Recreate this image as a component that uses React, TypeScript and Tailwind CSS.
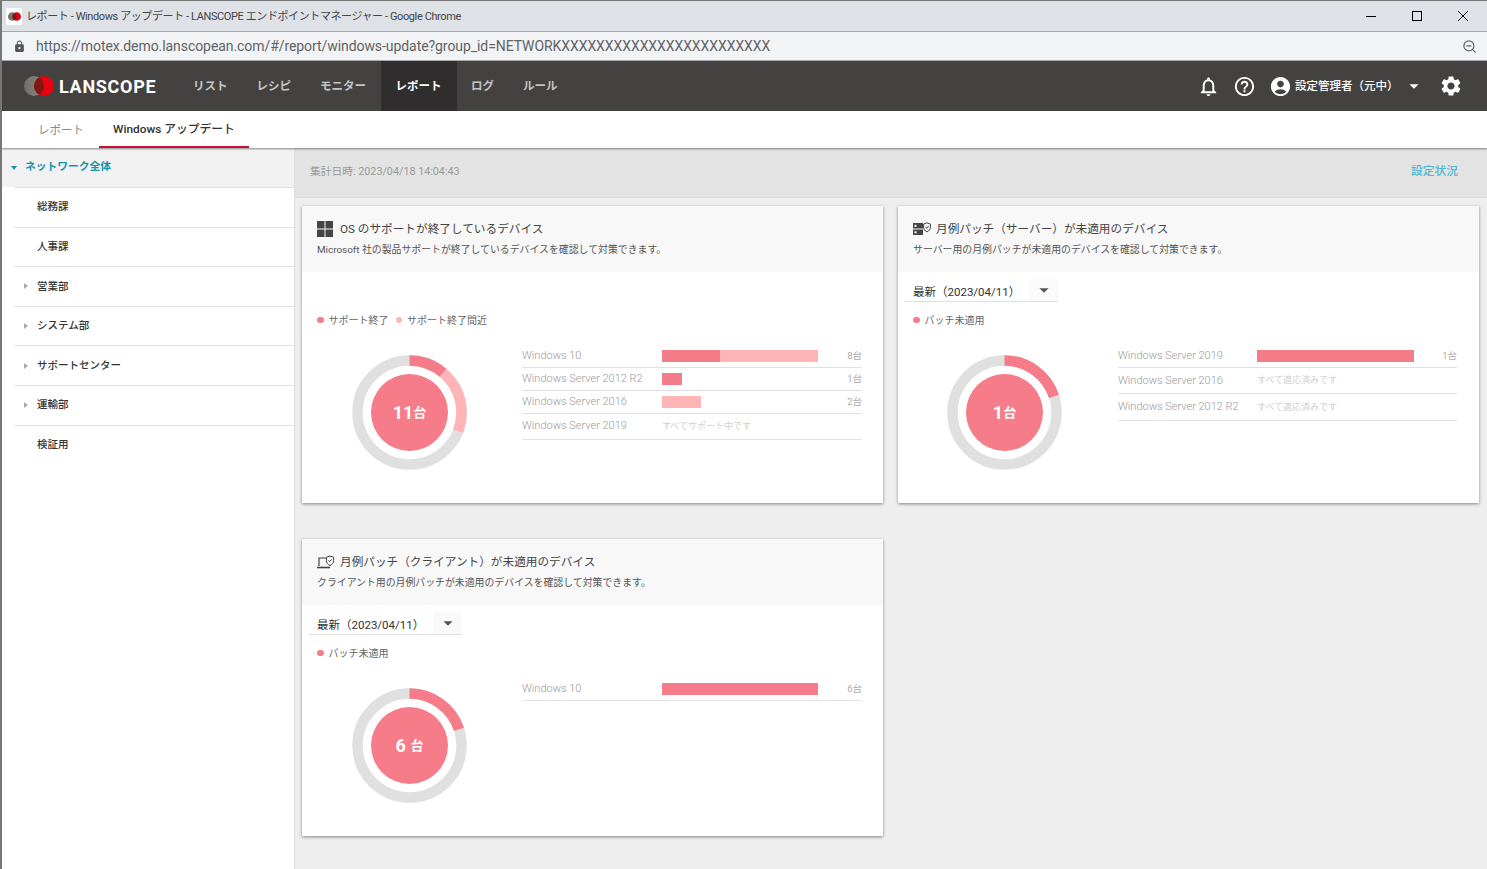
import { ZoomOut } from "lucide-react"
import {
  MdAccountCircle,
  MdArrowDropDown,
  MdHelpOutline,
  MdLock,
  MdNotificationsNone,
  MdSettings,
} from "react-icons/md"

const RED = "#f77c8a"
const LIGHT = "#ffb5b5"

type Row = {
  label: string
  dark?: number
  light?: number
  count?: string
  empty?: string
  rowClass?: string
}

type CardProps = {
  icon: React.ReactNode
  title: string
  desc: string
  select?: string
  legend: { color: string; text: string }[]
  total: [string, string]
  arcs: { from: number; to: number; color: string }[]
  rows: Row[]
  narrow?: boolean
}

function WindowsIcon() {
  return (
    <svg width="16" height="16" viewBox="0 0 16 16" fill="#444">
      <rect x="0" y="0" width="7.5" height="7.5" />
      <rect x="8.5" y="0" width="7.5" height="7.5" />
      <rect x="0" y="8.5" width="7.5" height="7.5" />
      <rect x="8.5" y="8.5" width="7.5" height="7.5" />
    </svg>
  )
}

function ServerShieldIcon() {
  return (
    <svg width="18" height="14" viewBox="0 0 18 14">
      <rect x="0" y="1" width="10" height="5.5" fill="#444" />
      <rect x="0" y="7.5" width="10" height="5.5" fill="#444" />
      <rect x="1.5" y="2.8" width="2" height="2" fill="#fff" />
      <rect x="1.5" y="9.3" width="2" height="2" fill="#fff" />
      <path d="M14 .8l3.4 1.2v3c0 2.4-1.4 4-3.4 4.9-2-.9-3.4-2.5-3.4-4.9V2z" fill="#f8f8f8" stroke="#444" strokeWidth="1" />
      <path d="M12.4 5l1.2 1.2 2-2.2" fill="none" stroke="#444" strokeWidth="1" />
    </svg>
  )
}

function LaptopShieldIcon() {
  return (
    <svg width="18" height="14" viewBox="0 0 18 14">
      <path d="M2 11V3h7" fill="none" stroke="#444" strokeWidth="1.2" />
      <path d="M0 12.5h13" stroke="#444" strokeWidth="1.6" />
      <path d="M13 1l3.6 1.2v3.2c0 2.4-1.5 4.2-3.6 5.1-2.1-.9-3.6-2.7-3.6-5.1V2.2z" fill="#f8f8f8" stroke="#444" strokeWidth="1" />
      <path d="M11.4 5.4l1.2 1.2 2-2.2" fill="none" stroke="#444" strokeWidth="1" />
    </svg>
  )
}

function Logo({ id, width, height }: { id: string; width: number; height: number }) {
  return (
    <svg width={width} height={height} viewBox="0 0 30 20" className="shrink-0">
      <defs>
        <linearGradient id={`${id}-grey`} x1="0" x2="1" y1="0" y2="0">
          <stop offset="0" stopColor="#6f706a" />
          <stop offset="1" stopColor="#8a8a84" />
        </linearGradient>
        <clipPath id={`${id}-lens`}>
          <circle cx="10" cy="10" r="10" />
        </clipPath>
      </defs>
      <circle cx="10" cy="10" r="10" fill={`url(#${id}-grey)`} />
      <circle cx="20" cy="10" r="10" fill="#e60012" />
      <circle cx="20" cy="10" r="10" fill="#7c1a12" clipPath={`url(#${id}-lens)`} />
    </svg>
  )
}

function Donut({ arcs, total }: { arcs: CardProps["arcs"]; total: [string, string] }) {
  return (
    <div className="relative w-[115px] h-[115px] shrink-0">
      <svg width="115" height="115" viewBox="0 0 115 115">
        <circle cx="57.5" cy="57.5" r="52" fill="none" stroke="#e0e0e0" strokeWidth="10.5" />
        {arcs.map((a) => (
          <circle
            key={a.color}
            cx="57.5"
            cy="57.5"
            r="52"
            fill="none"
            stroke={a.color}
            strokeWidth="10.5"
            pathLength={360}
            strokeDasharray={`${a.to - a.from} 360`}
            strokeDashoffset={-a.from}
            transform="rotate(-90 57.5 57.5)"
          />
        ))}
        <circle cx="57.5" cy="57.5" r="38.5" fill={RED} />
      </svg>
      <div className="absolute inset-0 flex items-center justify-center text-white font-bold">
        <span className="text-[18px] leading-none whitespace-pre">{total[0]}</span>
        <span className="text-[13px] leading-none">{total[1]}</span>
      </div>
    </div>
  )
}

function Card({ icon, title, desc, select, legend, total, arcs, rows, narrow }: CardProps) {
  return (
    <div className="h-[297px] bg-white shadow-[0_1px_3px_rgba(0,0,0,0.45)]">
      <div className="h-[66px] bg-[#f8f8f8] px-[15px] pt-[14px]">
        <div className="flex items-center h-[18px]">
          <div className="w-[23px] shrink-0 flex items-center">{icon}</div>
          <h3 className="text-[11.65px] font-normal text-[#444] leading-[18px]">{title}</h3>
        </div>
        <p className="mt-[5px] text-[9.9px] leading-[14px] text-[#555]">{desc}</p>
      </div>

      <div className="h-[23px] mt-[7px] pl-[7px]">
        {select && (
          <div className="w-[153px] h-[23px] flex items-center border-b border-[#e0e0e0]">
            <span className="flex-1 pl-[8px] pt-[5px] text-[11.5px] text-[#333]">{select}</span>
            <span className="w-[29px] h-full bg-[#fafafa] flex items-center justify-center text-[#555]">
              <MdArrowDropDown size={22} />
            </span>
          </div>
        )}
      </div>

      <div className="mt-[10px] h-[16px] pl-[15px] flex items-center gap-[7px]">
        {legend.map((l) => (
          <div key={l.text} className="flex items-center gap-[5px]">
            <span className="w-[6.5px] h-[6.5px] rounded-full" style={{ backgroundColor: l.color }} />
            <span className="text-[10px] text-[#666]">{l.text}</span>
          </div>
        ))}
      </div>

      <div className={narrow ? "mt-[17px] pl-[49px] flex items-start" : "mt-[17px] pl-[50px] flex items-start"}>
        <div className="mt-[10px]">
          <Donut arcs={arcs} total={total} />
        </div>
        <div className={narrow ? "ml-[56px] w-[339px]" : "ml-[55px] w-[340px]"}>
          {rows.map((r) => (
            <div
              key={r.label}
              className={
                r.rowClass ??
                (r.empty
                  ? "flex items-center h-[26px] border-b border-[#e0e0e0]"
                  : "flex items-center h-[23px] border-b border-[#e0e0e0]")
              }
            >
              <span className={narrow ? "w-[139px] shrink-0 text-[11px] font-light text-[#999]" : "w-[140px] shrink-0 text-[11px] font-light text-[#999]"}>
                {r.label}
              </span>
              {r.empty ? (
                <span className="text-[9px] text-[#d0d0d0]">{r.empty}</span>
              ) : (
                <>
                  <div className="w-[157px] shrink-0 flex h-[12px]">
                    {!!r.dark && <div className="h-full" style={{ width: r.dark, backgroundColor: RED }} />}
                    {!!r.light && <div className="h-full" style={{ width: r.light, backgroundColor: LIGHT }} />}
                  </div>
                  <span className="flex-1 text-right text-[9.5px] text-[#aaa]">{r.count}</span>
                </>
              )}
            </div>
          ))}
        </div>
      </div>
    </div>
  )
}

const groups = [
  { name: "総務課", arrow: false },
  { name: "人事課", arrow: false },
  { name: "営業部", arrow: true },
  { name: "システム部", arrow: true },
  { name: "サポートセンター", arrow: true },
  { name: "運輸部", arrow: true },
  { name: "検証用", arrow: false },
]

const navItems = ["リスト", "レシピ", "モニター", "レポート", "ログ", "ルール"]

export default function App() {
  return (
    <div className="w-[1487px] h-screen overflow-hidden flex flex-col border-t border-l-2 border-[#777] bg-[#eeeeee] font-['Roboto','Noto_Sans_CJK_JP',sans-serif]">
      {/* browser chrome */}
      <div className="h-[31px] shrink-0 bg-[#dee1e6] flex items-center border-b border-[#aaa]">
        <div className="ml-[4px] w-[16px] h-[17px] rounded-[2px] bg-white flex items-center justify-center">
          <Logo id="favicon" width={13} height={9} />
        </div>
        <span className="ml-[4px] pt-[2px] text-[11px] tracking-[-0.4px] text-[#444]">
          レポート - Windows アップデート - LANSCOPE エンドポイントマネージャー - Google Chrome
        </span>
        <div className="ml-auto flex items-center text-black">
          <svg width="10" height="10" viewBox="0 0 10 10" className="mr-[36px]">
            <path d="M0 5.5h10" stroke="#000" strokeWidth="1" />
          </svg>
          <svg width="10" height="10" viewBox="0 0 10 10" className="mr-[36px]">
            <rect x=".5" y=".5" width="9" height="9" fill="none" stroke="#000" strokeWidth="1" />
          </svg>
          <svg width="10" height="10" viewBox="0 0 10 10" className="mr-[19px]">
            <path d="M0 0l10 10M10 0L0 10" stroke="#000" strokeWidth="1" />
          </svg>
        </div>
      </div>
      <div className="h-[29px] shrink-0 bg-[#f1f3f4] flex items-center border-b border-[#aaa]">
        <MdLock size={13} className="ml-[11px] text-[#555]" />
        <span className="ml-[10px] text-[14px] text-[#5f6368] tracking-[-0.07px]">
          https://motex.demo.lanscopean.com/#/report/windows-update?group_id=NETWORKXXXXXXXXXXXXXXXXXXXXXXXX
        </span>
        <ZoomOut size={15} className="ml-auto mr-[10px] text-[#666]" />
      </div>

      {/* app header */}
      <header className="h-[50px] shrink-0 bg-[#444240] flex items-center">
        <div className="ml-[22px]">
          <Logo id="brand" width={30} height={20} />
        </div>
        <span className="ml-[5px] w-[119.5px] text-[18px] font-bold text-white tracking-[0.7px]">LANSCOPE</span>
        <nav className="flex h-full">
          {navItems.map((n) =>
            n === "レポート" ? (
              <span key={n} className="h-full px-[15px] pt-[2px] flex items-center bg-[#2f2d2d] text-[11.5px] font-bold text-white">
                {n}
              </span>
            ) : (
              <span key={n} className="h-full px-[14.5px] pt-[2px] flex items-center text-[11.5px] font-bold text-[#c4c4c4]">
                {n}
              </span>
            ),
          )}
        </nav>
        <div className="ml-auto flex items-center text-white">
          <MdNotificationsNone size={23} />
          <MdHelpOutline size={23} className="ml-[13px]" />
          <MdAccountCircle size={23} className="ml-[13px]" />
          <span className="ml-[3px] pt-[2px] w-[109px] text-[11.5px] font-medium">設定管理者（元中）</span>
          <MdArrowDropDown size={22} className="-ml-[1px]" />
          <MdSettings size={24} className="ml-[14px] mr-[24px]" />
        </div>
      </header>

      {/* tabs */}
      <div className="relative z-10 h-[37px] shrink-0 bg-white flex shadow-[0_1px_2px_rgba(0,0,0,0.45)]">
        <span className="ml-[36px] w-[61px] pt-[2px] flex items-center text-[11.5px] text-[#888]">レポート</span>
        <span className="w-[150px] pt-[2px] flex items-center justify-center text-[11.8px] font-medium text-[#333] border-b-2 border-[#c8102e]">
          Windows アップデート
        </span>
      </div>

      <div className="flex-1 flex min-h-0">
        {/* group tree */}
        <aside className="w-[293px] shrink-0 bg-white border-r border-[#dedede]">
          <div className="h-[39px] bg-[#f2f2f2] flex items-center">
            <span className="ml-[9px] w-0 h-0 border-x-[3px] border-x-transparent border-t-[4px] border-t-[#1295ad]" />
            <span className="ml-[8px] text-[10.75px] font-bold text-[#1295ad]">ネットワーク全体</span>
          </div>
          <ul className="ml-[12px]">
            {groups.map((g) => (
              <li key={g.name} className="h-[39.6px] border-t border-[#e2e2e2] flex items-center">
                <span className="w-[11px] ml-[10px] shrink-0">
                  {g.arrow && (
                    <span className="block w-0 h-0 border-y-[3px] border-y-transparent border-l-[4px] border-l-[#aaa]" />
                  )}
                </span>
                <span className="ml-[2px] text-[10.5px] font-medium text-[#333]">{g.name}</span>
              </li>
            ))}
          </ul>
        </aside>

        {/* report area */}
        <main className="flex-1 min-w-0">
          <div className="h-[50px] pb-[1px] bg-[#e3e3e3] border-b border-[#dadada] flex items-center justify-between pl-[15px] pr-[29px]">
            <span className="text-[10.75px] text-[#999]">集計日時: 2023/04/18 14:04:43</span>
            <span className="text-[11.75px] font-medium text-[#4db8d4]">設定状況</span>
          </div>
          <div className="grid grid-cols-[581px_581px] gap-x-[15px] gap-y-[36px] pl-[7px] pt-[8px]">
            <Card
              icon={<WindowsIcon />}
              title="OS のサポートが終了しているデバイス"
              desc="Microsoft 社の製品サポートが終了しているデバイスを確認して対策できます。"
              legend={[
                { color: RED, text: "サポート終了" },
                { color: LIGHT, text: "サポート終了間近" },
              ]}
              total={["11", "台"]}
              arcs={[
                { from: 40, to: 111, color: LIGHT },
                { from: 0, to: 40, color: RED },
              ]}
              rows={[
                { label: "Windows 10", dark: 58, light: 98, count: "8台" },
                { label: "Windows Server 2012 R2", dark: 20, count: "1台" },
                { label: "Windows Server 2016", light: 39, count: "2台" },
                { label: "Windows Server 2019", empty: "すべてサポート中です" },
              ]}
            />
            <Card
              narrow
              icon={<ServerShieldIcon />}
              title="月例パッチ（サーバー）が未適用のデバイス"
              desc="サーバー用の月例パッチが未適用のデバイスを確認して対策できます。"
              select="最新（2023/04/11）"
              legend={[{ color: RED, text: "パッチ未適用" }]}
              total={["1", "台"]}
              arcs={[{ from: 0, to: 72, color: RED }]}
              rows={[
                { label: "Windows Server 2019", dark: 157, count: "1台" },
                {
                  label: "Windows Server 2016",
                  empty: "すべて適応済みです",
                  rowClass: "flex items-center h-[26px] pt-[1px] border-b border-[#e0e0e0]",
                },
                {
                  label: "Windows Server 2012 R2",
                  empty: "すべて適応済みです",
                  rowClass: "flex items-center h-[27px] pt-[1px] border-b border-[#e0e0e0]",
                },
              ]}
            />
            <Card
              icon={<LaptopShieldIcon />}
              title="月例パッチ（クライアント）が未適用のデバイス"
              desc="クライアント用の月例パッチが未適用のデバイスを確認して対策できます。"
              select="最新（2023/04/11）"
              legend={[{ color: RED, text: "パッチ未適用" }]}
              total={["6 ", "台"]}
              arcs={[{ from: 0, to: 72, color: RED }]}
              rows={[{ label: "Windows 10", dark: 156, count: "6台" }]}
            />
          </div>
        </main>
      </div>
    </div>
  )
}
